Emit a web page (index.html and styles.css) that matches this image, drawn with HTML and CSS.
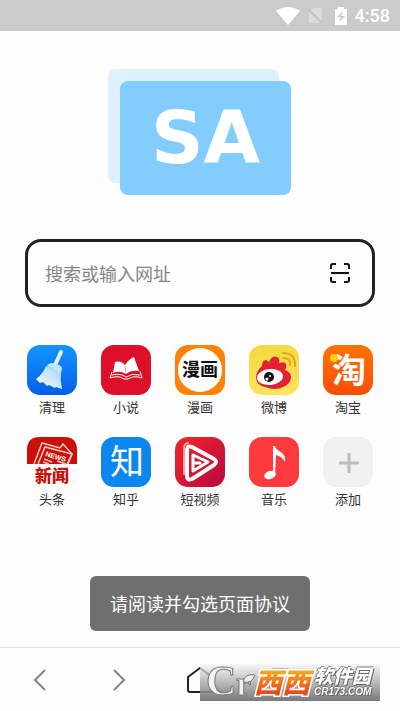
FILE: index.html
```html
<!DOCTYPE html>
<html lang="zh-CN">

<head>
    <meta charset="UTF-8">
    <meta name="viewport" content="width=device-width, initial-scale=1.0">
    <title>SA浏览器</title>
    <link rel="stylesheet" href="styles.css">
</head>

<body>
    <!-- Status bar -->
    <header class="status-bar">
        <svg width="24" height="18" viewBox="0 0 24 18" fill="#fff">
            <path d="M0 4Q12-4 24 4L12 18Z" />
        </svg>
        <svg width="15" height="18" viewBox="0 0 15 18">
            <path d="M5 1h9v15H1V5z" fill="#dcdcdc" />
            <path d="M0 2l14 14" stroke="#c4c4c4" stroke-width="2" />
        </svg>
        <svg class="battery" width="12" height="18" viewBox="0 0 12 18">
            <path d="M0 2h3V0h6v2h3v16H0z" fill="#fff" />
            <path d="M8 4L2 10h4l-2 5 6-6H6z" fill="#c8c8c8" />
        </svg>
        <span class="time">4:58</span>
    </header>

    <main class="home">
        <div class="logo">
            <div class="logo-card">SA</div>
        </div>

        <!-- Search -->
        <form class="search-box">
            <input type="text" class="search-input" placeholder="搜索或输入网址" aria-label="搜索或输入网址">
            <button type="button" class="scan-button" aria-label="扫一扫">
                <svg width="20" height="20" viewBox="0 0 20 20" fill="none" stroke="#111" stroke-width="2">
                    <path d="M1 6V3q0-2 2-2h3M14 1h3q2 0 2 2v3M19 14v3q0 2-2 2h-3M6 19H3q-2 0-2-2v-3M1 10h18" />
                </svg>
            </button>
        </form>

        <!-- Shortcuts -->
        <nav class="shortcuts">
            <a href="#" class="shortcut">
                <svg class="icon" viewBox="0 0 50 50">
                    <defs>
                        <linearGradient id="clean-bg" x2="0" y2="1">
                            <stop stop-color="#1295ff" />
                            <stop offset="1" stop-color="#075fe8" />
                        </linearGradient>
                        <linearGradient id="brush" x1="1" y1="0" x2="0" y2="1">
                            <stop stop-color="#9ed3fb" />
                            <stop offset="1" stop-color="#fff" />
                        </linearGradient>
                    </defs>
                    <rect width="50" height="50" rx="13" fill="url(#clean-bg)" />
                    <path d="M34 7l-6 13" stroke="#e5f4ff" stroke-width="4" stroke-linecap="round" />
                    <path d="M20 21q1-3 6-3 7 1 9 5l-1 5z" fill="#c5e5fd" />
                    <path d="M19 21l15 6q-1 8 1 17l-6-2-1 1-6-3-2 1-4-4-3 1-4-4q7-5 10-13z" fill="url(#brush)" />
                </svg>
                <span class="label">清理</span>
            </a>
            <a href="#" class="shortcut">
                <svg class="icon" viewBox="0 0 50 50">
                    <rect width="50" height="50" rx="13" fill="#dc1029" />
                    <path d="M12 28l2-11q6-2 10 3 4-6 9-8l5 14q-8-1-13 3-6-4-13-1z" fill="#fff" />
                    <path d="M24 21l1 8" stroke="#eba7ae" />
                    <path d="M11 27l-2 6q9-3 14 1h4q6-4 14-1l-2-7M11 30q9-2 14 2 6-4 14-2" fill="none" stroke="#fff" />
                </svg>
                <span class="label">小说</span>
            </a>
            <a href="#" class="shortcut">
                <svg class="icon" viewBox="0 0 50 50">
                    <rect width="50" height="50" rx="13" fill="#ff8206" />
                    <circle cx="25" cy="25" r="22" fill="#fff" />
                    <text class="comic-text" x="25" y="31">漫画</text>
                </svg>
                <span class="label">漫画</span>
            </a>
            <a href="#" class="shortcut">
                <svg class="icon" viewBox="0 0 50 50">
                    <defs>
                        <linearGradient id="weibo-bg" x2="0" y2="1">
                            <stop stop-color="#f4d83f" />
                            <stop offset="1" stop-color="#ffe35e" />
                        </linearGradient>
                    </defs>
                    <rect width="50" height="50" rx="13" fill="url(#weibo-bg)" />
                    <path d="M7 32q1-7 6-11 0-6 4-6l3 2q3-7 8-5 3 1 2 6 6-2 7 1 1 3-1 6 6 2 6 7 0 7-8 10-8 4-18 0-9-2-9-10z" fill="#e71f35" />
                    <ellipse cx="21" cy="32" rx="13" ry="8" transform="rotate(-6 21 32)" fill="#fff" />
                    <circle cx="20" cy="32" r="5" fill="#16110e" />
                    <circle cx="18" cy="34" r="1.5" fill="#fff" />
                    <circle cx="21" cy="31" r="1" fill="#fff" />
                    <path d="M34 8q13 0 12 13M34 13q8 0 7 7" fill="none" stroke="#e8a31e" stroke-width="2" stroke-linecap="round" />
                </svg>
                <span class="label">微博</span>
            </a>
            <a href="#" class="shortcut">
                <svg class="icon" viewBox="0 0 50 50">
                    <defs>
                        <linearGradient id="taobao-bg" x2="0" y2="1">
                            <stop stop-color="#ff7306" />
                            <stop offset="1" stop-color="#fa4c05" />
                        </linearGradient>
                    </defs>
                    <rect width="50" height="50" rx="13" fill="url(#taobao-bg)" />
                    <text class="taobao-text" x="26" y="38">淘</text>
                    <circle cx="11" cy="13" r="4" fill="#ffd40f" />
                </svg>
                <span class="label">淘宝</span>
            </a>
            <a href="#" class="shortcut">
                <svg class="icon" viewBox="0 0 50 50">
                    <path d="M0 27V13Q0 0 13 0h24q13 0 13 13v14z" fill="#cc1009" />
                    <g fill="none" stroke="#f5c9c5" stroke-width="1.5">
                        <path d="M7 27L15 6l18 5M33 11l3-4 9 10-5 10" />
                        <path d="M11 27l7-17 27 7-4 10M17 22l8 3M16 25l6 2M30 24l9 3" />
                    </g>
                    <text class="paper-text" x="18" y="19" transform="rotate(16 18 19)">NEWS</text>
                    <text class="news-text" x="25" y="45">新闻</text>
                </svg>
                <span class="label">头条</span>
            </a>
            <a href="#" class="shortcut">
                <svg class="icon" viewBox="0 0 50 50">
                    <rect width="50" height="50" rx="13" fill="#0b87ee" />
                    <text class="zhihu-text" x="26" y="37">知</text>
                </svg>
                <span class="label">知乎</span>
            </a>
            <a href="#" class="shortcut">
                <svg class="icon" viewBox="0 0 50 50">
                    <defs>
                        <linearGradient id="video-bg" x2="1" y2="1">
                            <stop stop-color="#f32727" />
                            <stop offset="1" stop-color="#b80742" />
                        </linearGradient>
                    </defs>
                    <rect width="50" height="50" rx="13" fill="url(#video-bg)" />
                    <g fill="none" stroke="#fff" stroke-linejoin="round" stroke-linecap="round">
                        <path d="M9 37V11q0-4 4-5" stroke="#ff9b96" stroke-width="2" />
                        <path d="M12 13q0-5 5-3l22 12q4 3 0 6L17 42q-5 2-5-3z" stroke-width="4" />
                        <path d="M18 33V18l15 7-15 9v-8h7" stroke-width="3" />
                    </g>
                </svg>
                <span class="label">短视频</span>
            </a>
            <a href="#" class="shortcut">
                <svg class="icon" viewBox="0 0 50 50">
                    <rect width="50" height="50" rx="13" fill="#ff3a3c" />
                    <ellipse cx="21" cy="38" rx="6" ry="4" transform="rotate(-20 21 38)" fill="#fff" />
                    <path d="M24 9h2q1 4 6 6 5 4 4 10-2-5-9-7l-1 20h-2z" fill="#fff" />
                </svg>
                <span class="label">音乐</span>
            </a>
            <a href="#" class="shortcut">
                <svg class="icon" viewBox="0 0 50 50">
                    <rect width="50" height="50" rx="13" fill="#f1f1f1" />
                    <path d="M16 26h20M26 16v20" stroke="#bdbdbd" stroke-width="3" />
                </svg>
                <span class="label">添加</span>
            </a>
        </nav>
    </main>

    <div class="toast" role="status">请阅读并勾选页面协议</div>

    <!-- Bottom toolbar -->
    <footer class="toolbar">
        <button class="tool" aria-label="后退">
            <svg width="24" height="24" viewBox="0 0 24 24" fill="none" stroke="#858585" stroke-width="2">
                <path d="M17 2L7 12l10 10" />
            </svg>
        </button>
        <button class="tool" aria-label="前进">
            <svg width="24" height="24" viewBox="0 0 24 24" fill="none" stroke="#858585" stroke-width="2">
                <path d="M6 2l10 10L6 22" />
            </svg>
        </button>
        <button class="tool" aria-label="主页">
            <svg width="26" height="26" viewBox="0 0 26 26" fill="none" stroke="#222" stroke-width="2" stroke-linejoin="round">
                <path d="M1 10L13 1l12 9v13q0 2-2 2H3q-2 0-2-2z" />
            </svg>
        </button>
        <button class="tool" aria-label="窗口">
            <svg width="24" height="26" viewBox="0 0 24 26" fill="none" stroke="#555" stroke-width="2">
                <path d="M4 2h16M2 6h20v18H2z" />
            </svg>
        </button>
        <button class="tool" aria-label="菜单"></button>
    </footer>

    <!-- Site watermark -->
    <div class="watermark">
        <svg class="watermark-mark" width="114" height="37" viewBox="0 0 114 37">
            <defs>
                <linearGradient id="name-fill" x2="0" y2="1">
                    <stop offset="0.2" stop-color="#f9b01c" />
                    <stop offset="0.8" stop-color="#e8491c" />
                </linearGradient>
            </defs>
            <text class="mark-c" x="6" y="31">C</text>
            <text class="mark-r" x="36" y="31">r</text>
            <path d="M43 18q2-9 12-7-3 9-12 7z" fill="#eee" stroke="#777" />
            <text class="mark-name" x="54" y="29">西西</text>
        </svg>
        <div class="watermark-site">
            <span class="site-name">软件园</span>
            <span class="site-url">CR173.COM</span>
        </div>
    </div>
</body>

</html>
```
FILE: styles.css
```css
* {
    margin: 0;
    padding: 0;
    box-sizing: border-box;
}

body {
    font-family: "Noto Sans CJK SC", sans-serif;
    background: #fdfdfd;
    color: #333;
    display: flex;
    flex-direction: column;
    min-height: 100vh;
}

button {
    border: none;
    background: none;
    cursor: pointer;
}

svg {
    display: block;
    overflow: visible;
}

.status-bar {
    display: flex;
    justify-content: flex-end;
    align-items: center;
    gap: 8px;
    height: 31px;
    padding-right: 10px;
    background: #cbcbcb;
}

.battery {
    margin-left: 4px;
}

.time {
    font-family: Roboto, sans-serif;
    font-size: 18px;
    font-weight: 500;
    color: #fff;
}

.home {
    flex: 1;
    padding: 38px 15px 16px;
}

/* Two stacked cards */
.logo {
    display: grid;
    width: 184px;
    margin: 0 auto;
}

.logo::before {
    content: "";
    grid-area: 1 / 1;
    width: 171px;
    height: 114px;
    border-radius: 8px;
    background: #def1fd;
}

.logo-card {
    grid-area: 1 / 1;
    width: 171px;
    height: 114px;
    margin: 12px 0 0 12px;
    border-radius: 8px;
    background: #82ccff;
    color: #fff;
    font-family: "DejaVu Sans", sans-serif;
    font-size: 73px;
    font-weight: bold;
    line-height: 114px;
    text-align: center;
}

.search-box {
    display: flex;
    align-items: center;
    height: 68px;
    margin: 44px 10px 0;
    padding: 0 22px 0 17px;
    border: 3px solid #222;
    border-radius: 16px;
}

.search-input {
    flex: 1;
    min-width: 0;
    height: 40px;
    border: none;
    outline: none;
    background: none;
    font-family: inherit;
    font-size: 18px;
}

.search-input::placeholder {
    color: #858585;
}

.shortcuts {
    display: grid;
    grid-template-columns: repeat(5, 1fr);
    gap: 20px 0;
    margin-top: 38px;
}

.shortcut {
    display: flex;
    flex-direction: column;
    align-items: center;
    gap: 2px;
    color: #333;
    text-decoration: none;
}

.icon {
    width: 50px;
    height: 50px;
}

.icon text {
    text-anchor: middle;
}

.label {
    font-size: 13px;
    line-height: 20px;
}

.comic-text {
    font-size: 18px;
    font-weight: 700;
    fill: #111;
}

.taobao-text {
    font-size: 34px;
    font-weight: 700;
    fill: #fff;
}

.icon .paper-text {
    font-family: "Liberation Sans", sans-serif;
    font-size: 7px;
    font-weight: bold;
    text-anchor: start;
    fill: #fff;
}

.news-text {
    font-size: 17px;
    font-weight: 900;
    fill: #cc1009;
}

.zhihu-text {
    font-size: 34px;
    font-weight: 400;
    fill: #fff;
}

.toast {
    position: fixed;
    left: 50%;
    bottom: 80px;
    transform: translateX(-50%);
    padding: 14px 20px;
    border-radius: 6px;
    background: #6f6f6f;
    color: #fff;
    font-size: 18px;
    line-height: 27px;
    white-space: nowrap;
}

.toolbar {
    display: grid;
    grid-template-columns: repeat(5, 1fr);
    height: 64px;
    border-top: 1px solid #dedede;
}

.tool {
    display: flex;
    align-items: center;
    justify-content: center;
}

.watermark {
    position: fixed;
    right: 20px;
    bottom: 10px;
    display: flex;
    width: 180px;
    height: 37px;
    background: linear-gradient(rgba(245, 245, 245, 0.7), rgba(115, 115, 115, 0.95));
}

.mark-c,
.mark-r {
    font-family: "Liberation Serif", serif;
    fill: #f2f2f2;
    stroke: #777;
    stroke-width: 1px;
    font-weight: bold;
}

.mark-c {
    font-size: 42px;
}

.mark-r {
    font-size: 34px;
}

.mark-name {
    font-size: 28px;
    font-weight: 900;
    font-style: italic;
    fill: url(#name-fill);
    stroke: #fff;
    stroke-width: 3px;
    paint-order: stroke;
}

.watermark-site {
    display: flex;
    flex-direction: column;
    color: #fff;
    font-style: italic;
    text-shadow: 1px 1px #666, -1px 0 #777, 0 -1px #777;
}

.site-name {
    font-size: 19px;
    font-weight: 900;
    line-height: 22px;
}

.site-url {
    font-family: "Liberation Sans", sans-serif;
    font-size: 10px;
    font-weight: bold;
    line-height: 12px;
}
```
